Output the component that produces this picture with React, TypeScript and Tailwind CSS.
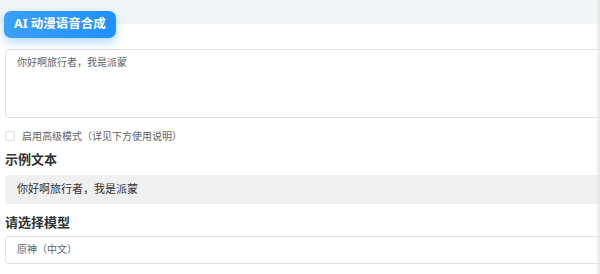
export default function App() {
  const font = { fontFamily: '"Noto Sans", "Noto Sans CJK SC", sans-serif' };
  return (
    <div className="relative w-[600px] h-[274px] overflow-hidden bg-white" style={font}>
      {/* top band */}
      <div className="h-[24px] bg-[#f1f5f8]" />
      <div className="w-[640px] pl-[5px] -mt-[14px]">
        <div className="relative z-10 -ml-[1px] inline-flex h-[27px] items-center rounded-[7px] bg-gradient-to-r from-[#3aa0f8] to-[#1e90ff] px-[10px] text-[12.5px] font-bold text-white shadow-[0_4px_10px_rgba(30,144,255,0.35)]">
          AI 动漫语音合成
        </div>
        <div className="mt-[11px] h-[69px] rounded-[4px] border border-[#dcdfe6] px-[11px] pt-[4px] text-[10px] leading-[16px] text-[#606266]">
          你好啊旅行者，我是派蒙
        </div>
        <label className="mt-[11px] flex h-[14px] items-center gap-[7px] text-[10px] leading-[14px] text-[#606266]">
          <span className="h-[10px] w-[10px] rounded-[2px] border border-[#dcdfe6] bg-white" />
          启用高级模式（详见下方使用说明）
        </label>
        <h2 className="mt-[6px] text-[13px] font-bold leading-[20px] text-[#303133]">示例文本</h2>
        <div className="mt-[6px] flex h-[29px] items-center rounded-[4px] bg-[#f0f0f0] px-[12px] text-[11px] text-[#303133]">
          你好啊旅行者，我是派蒙
        </div>
        <h2 className="mt-[8px] text-[13px] font-bold leading-[20px] text-[#303133]">请选择模型</h2>
        <div className="mt-[4px] flex h-[28px] items-center rounded-[4px] border border-[#dcdfe6] px-[11px] text-[10px] text-[#606266]">
          原神（中文）
        </div>
      </div>
      {/* right edge shadow */}
      <div className="absolute right-0 top-0 h-full w-[4px] bg-gradient-to-r from-transparent to-[#e4e4e4]" />
    </div>
  );
}
